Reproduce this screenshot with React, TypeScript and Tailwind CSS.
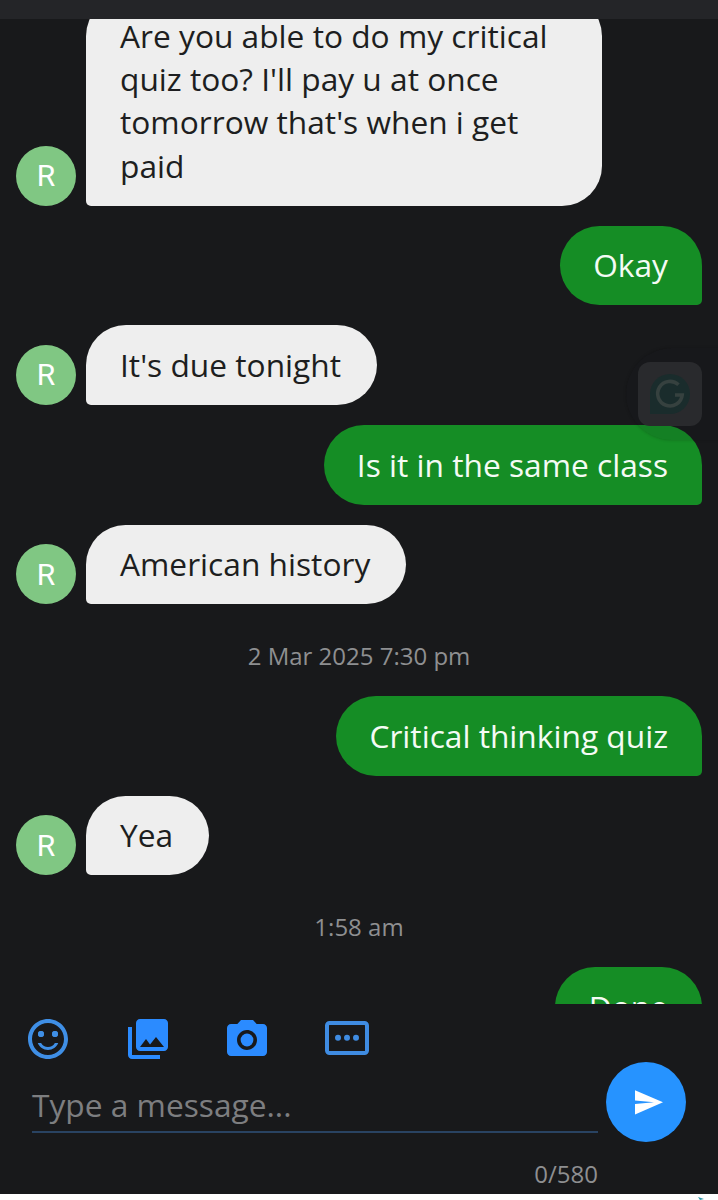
import { MdPhotoCamera, MdPhotoLibrary, MdSentimentSatisfiedAlt } from "react-icons/md";

type Entry =
  | { kind: "in"; text: string }
  | { kind: "out"; text: string }
  | { kind: "time"; text: string };

const ENTRIES: Entry[] = [
  {
    kind: "in",
    text: "Are you able to do my critical quiz too? I'll pay u at once tomorrow that's when i get paid",
  },
  { kind: "out", text: "Okay" },
  { kind: "in", text: "It's due tonight" },
  { kind: "out", text: "Is it in the same class" },
  { kind: "in", text: "American history" },
  { kind: "time", text: "2 Mar 2025 7:30 pm" },
  { kind: "out", text: "Critical thinking quiz" },
  { kind: "in", text: "Yea" },
  { kind: "time", text: "1:58 am" },
  { kind: "out", text: "Done" },
];

function Message({ entry }: { entry: Entry }) {
  if (entry.kind === "time") {
    return (
      <div className="flex h-[51.7px] justify-center pt-[14px] text-[24px] leading-[36px] text-[#8e8f91]">
        <span>{entry.text}</span>
      </div>
    );
  }

  if (entry.kind === "out") {
    return (
      <div className="flex justify-end">
        <div className="rounded-[40px] rounded-br-[5px] bg-[#158d25] pt-[17.7px] pr-[34px] pb-[18.8px] pl-[33.3px] text-[#f4fbf4]">
          {entry.text}
        </div>
      </div>
    );
  }

  return (
    <div className="flex items-end gap-[10px]">
      <div className="flex size-[60px] shrink-0 items-center justify-center rounded-full bg-[#80c783] font-['Roboto',sans-serif] text-[30px] text-white">
        R
      </div>
      <div className="max-w-[515.5px] rounded-[40px] rounded-bl-[5px] bg-[#eeeeee] pt-[17.7px] pr-[35.5px] pb-[18.8px] pl-[34px] text-[#1d1e20]">
        {entry.text}
      </div>
    </div>
  );
}

// Floating keyboard helper, dimmed while idle
function FloatingHelper() {
  return (
    <div className="absolute top-[348px] right-0 h-[92px] w-[92px] rounded-l-[46px] bg-[#17181a]/10 pt-[14px] pl-[11.5px] shadow-[0_0_3px_rgba(10,10,12,0.25)]">
      <div className="flex size-[64px] items-center justify-center rounded-[12px] bg-[#292a2d]">
        <svg viewBox="0 0 42 42" className="size-[42px]" fill="none">
          <path d="M21 1a20 20 0 1 1 0 40H1V21A20 20 0 0 1 21 1z" fill="#1a2c2c" />
          <path d="M29.5 11.8A12.3 12.3 0 1 0 33.2 22H26" stroke="#36413f" strokeWidth="3.6" />
        </svg>
      </div>
    </div>
  );
}

function QuickRepliesIcon() {
  return (
    <svg viewBox="0 0 44 34" className="h-[34px] w-[44px]" fill="none">
      <rect x="2" y="2" width="40" height="30" rx="2.5" stroke="currentColor" strokeWidth="4" />
      <circle cx="13" cy="16.7" r="3" fill="currentColor" />
      <circle cx="22" cy="16.7" r="3" fill="currentColor" />
      <circle cx="31" cy="16.7" r="3" fill="currentColor" />
    </svg>
  );
}

function SendIcon() {
  return (
    <svg viewBox="0 0 28 25" className="ml-[5px] h-[25px] w-[28px]" fill="white">
      <path d="M0 0.3L28 12.3L0 24.6V14L19 12.3L0 10.6z" />
    </svg>
  );
}

export default function App() {
  return (
    <div className="relative flex h-[1200px] w-[718px] flex-col overflow-hidden bg-[#18191b] font-['Open_Sans',sans-serif] text-[31.7px] leading-[43.2px]">
      <header className="h-[19px] shrink-0 bg-[#242528]" />

      {/* Conversation, scrolled so the first bubble is cut off at the top */}
      <main className="h-[985px] shrink-0 overflow-hidden px-4">
        <div className="-mt-[22.7px] flex flex-col gap-[20px]">
          {ENTRIES.map((entry, i) => (
            <Message key={i} entry={entry} />
          ))}
        </div>
      </main>

      {/* Composer */}
      <footer className="flex h-[190px] shrink-0 flex-col">
        <div className="flex h-[58px] items-center pt-[10px] pl-6 text-[#2b8bff]">
          <MdSentimentSatisfiedAlt className="mt-[2px] size-12 text-[#3f8fe6]" />
          <MdPhotoLibrary className="mt-[2px] ml-[52px] size-12" />
          <MdPhotoCamera className="mt-[4px] ml-[51px] size-12" />
          <div className="ml-[54px] text-[#3f8ce2]">
            <QuickRepliesIcon />
          </div>
        </div>
        <div className="flex pl-8">
          <div className="w-[566px]">
            <div className="h-[71px] border-b-[2px] border-[#294362] pt-[21px] text-[#7d7e80]">
              Type a message...
            </div>
            <div className="pt-[23px] text-right text-[24px] leading-[36px] text-[#8e8f91]">0/580</div>
          </div>
          <div className="ml-2 flex size-[80px] items-center justify-center rounded-full bg-[#2693ff]">
            <SendIcon />
          </div>
        </div>
      </footer>

      <div className="flex h-[6px] shrink-0 justify-end bg-white pr-[14px]">
        <svg viewBox="0 0 6 3" className="mt-[3px] h-[3px] w-[6px]">
          <path d="M0 0l6 2-4 1z" fill="#2b97a8" />
        </svg>
      </div>

      <FloatingHelper />
    </div>
  );
}
